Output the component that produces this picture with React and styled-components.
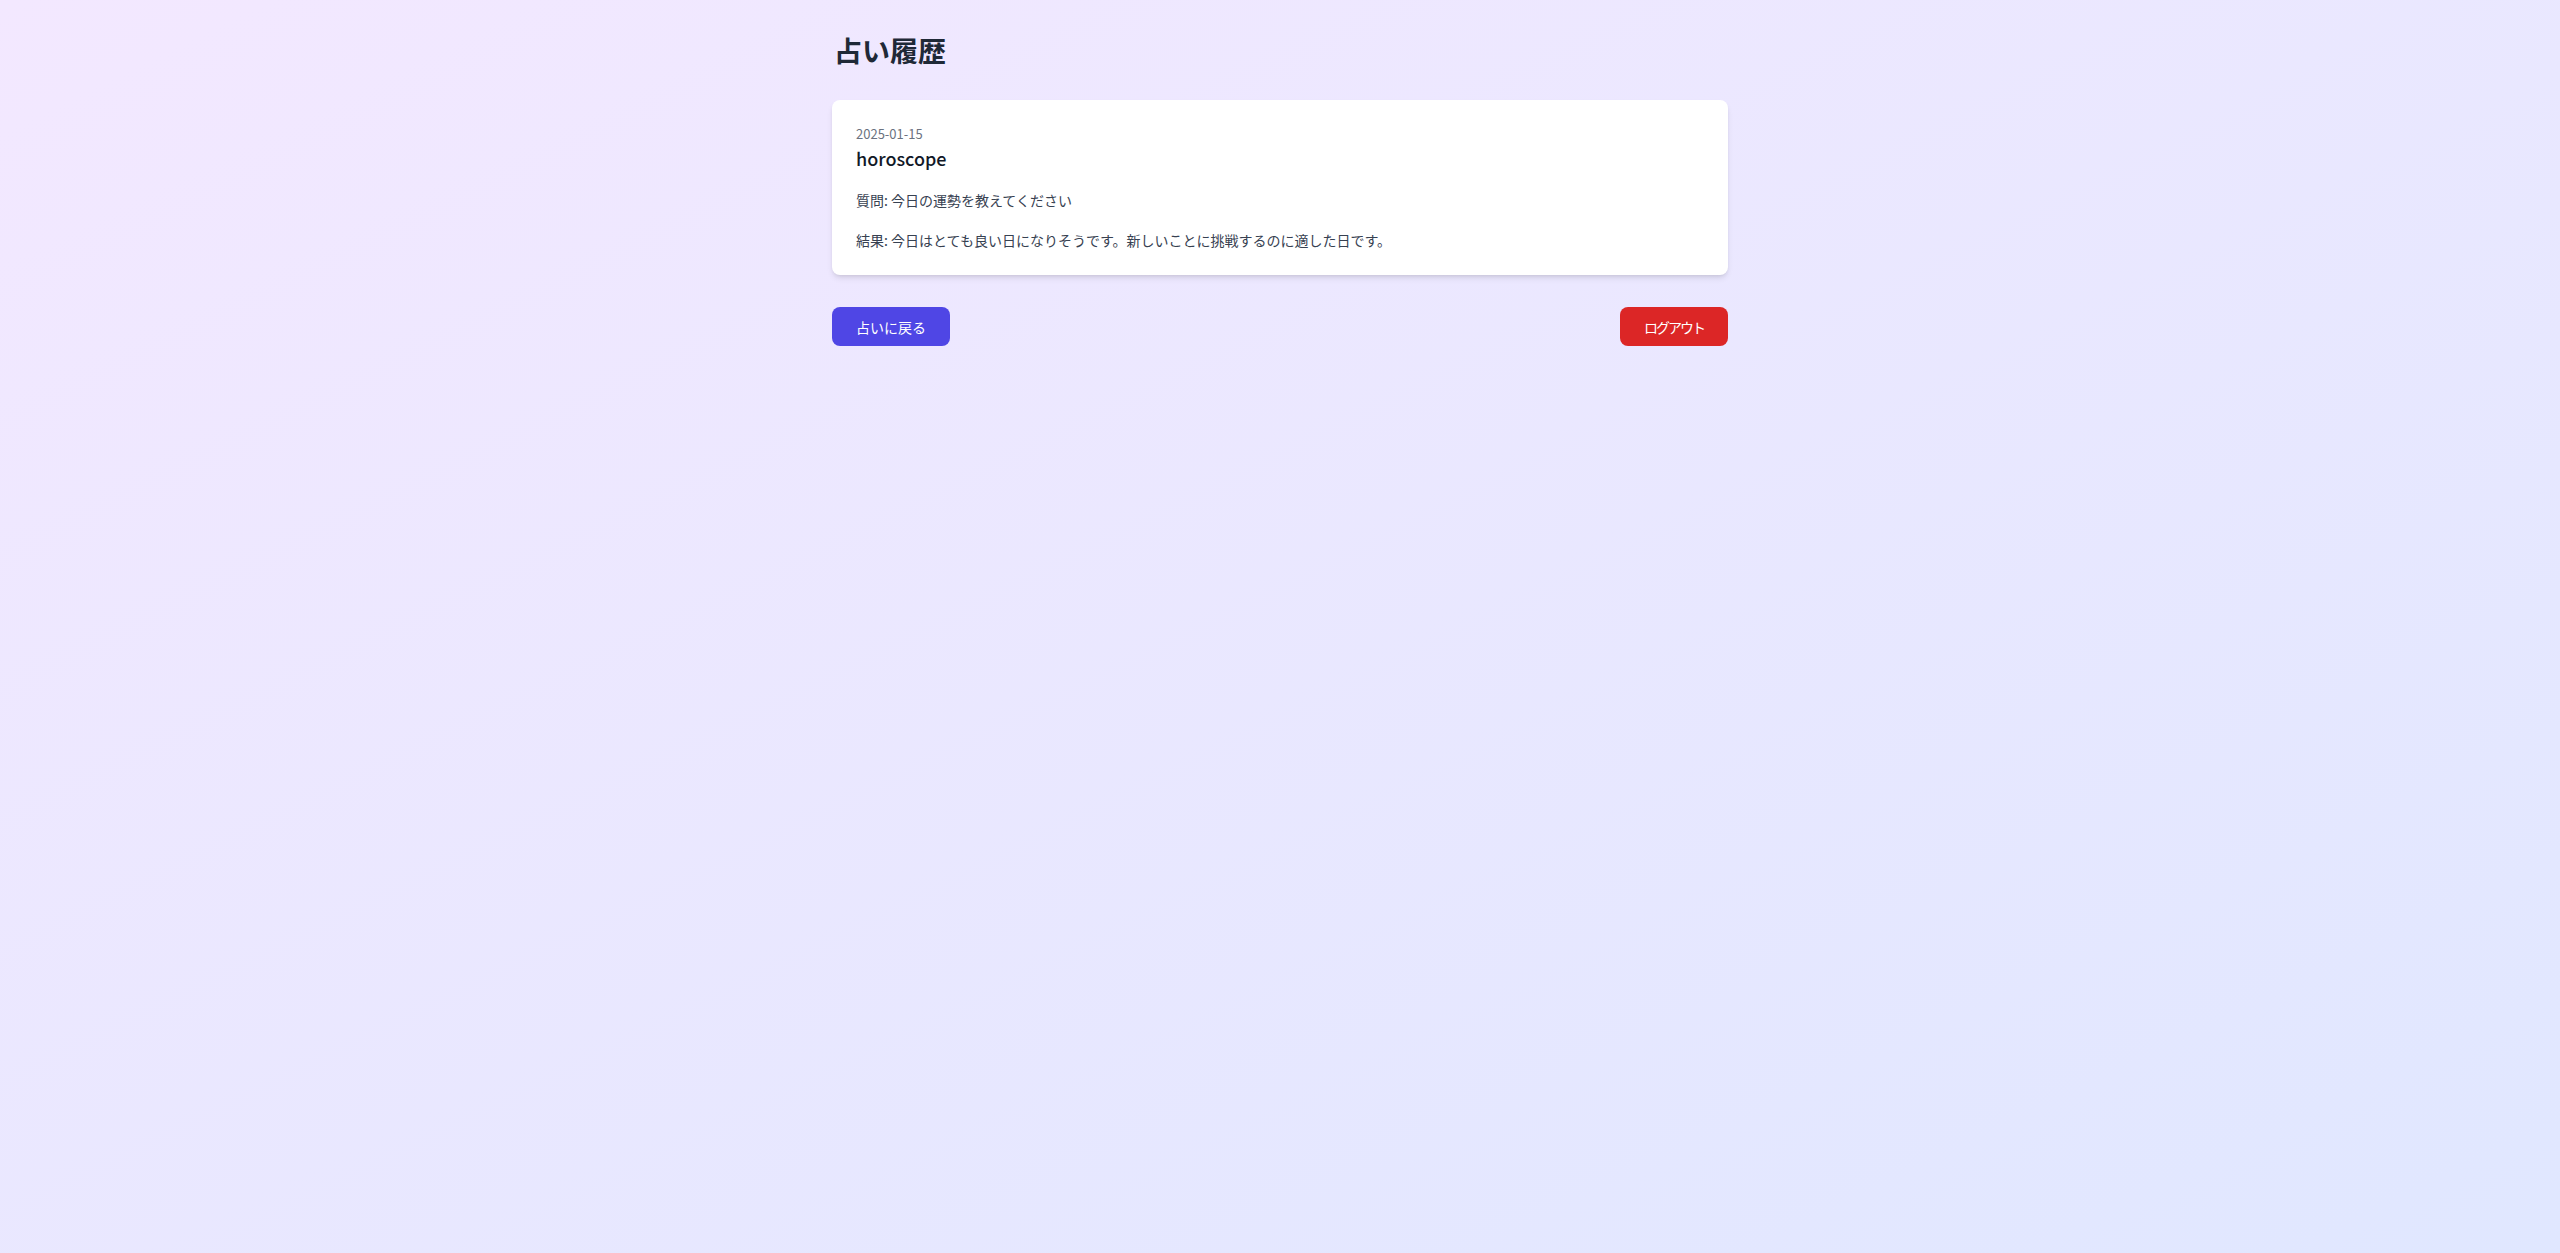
import React from 'react'
import styled, { createGlobalStyle } from 'styled-components'

const GlobalStyle = createGlobalStyle`
  * { box-sizing: border-box; }
  html, body {
    margin: 0;
    padding: 0;
  }
  body {
    font-family: "Noto Sans CJK JP", "Noto Sans", sans-serif;
  }
`

const Page = styled.div`
  min-height: 100vh;
  background: linear-gradient(to bottom right, #f3e8ff, #e0e7ff);
  padding: 32px 16px;
`

const Container = styled.div`
  max-width: 896px;
  margin: 0 auto;
`

const Title = styled.h1`
  margin: 0 0 32px;
  padding-left: 2px;
  font-size: 28px;
  line-height: 36px;
  font-weight: 700;
  color: #1f2937;
`

const Card = styled.div`
  background: #fff;
  border-radius: 8px;
  padding: 24px 24px 25px;
  box-shadow: 0 4px 6px -1px rgba(0, 0, 0, 0.1), 0 2px 4px -2px rgba(0, 0, 0, 0.1);
`

const DateText = styled.div`
  font-size: 13px;
  line-height: 20px;
  color: #6b7280;
`

const Kind = styled.h2`
  margin: 0 0 18px;
  font-size: 18px;
  line-height: 28px;
  font-weight: 500;
  color: #111827;
`

const Line = styled.p`
  margin: ${p => (p.last ? '0' : '0 0 20px')};
  font-size: 14px;
  line-height: 20px;
  color: #374151;
`

const Actions = styled.div`
  display: flex;
  justify-content: space-between;
  align-items: center;
  margin-top: 32px;
`

const Button = styled.button`
  height: 39px;
  padding: 0 24px;
  border: none;
  border-radius: 8px;
  font-family: inherit;
  font-size: 14px;
  letter-spacing: ${p => (p.danger ? '-2px' : '0')};
  color: #fff;
  cursor: pointer;
  background: ${p => (p.danger ? '#dc2626' : '#4f46e5')};
  &:hover {
    background: ${p => (p.danger ? '#b91c1c' : '#4338ca')};
  }
`

const history = [
  {
    id: 1,
    date: '2025-01-15',
    type: 'horoscope',
    question: '今日の運勢を教えてください',
    result: '今日はとても良い日になりそうです。新しいことに挑戦するのに適した日です。',
  },
]

export default function App() {
  return (
    <Page>
      <GlobalStyle />
      <Container>
        <Title>占い履歴</Title>
        {history.map(item => (
          <Card key={item.id}>
            <DateText>{item.date}</DateText>
            <Kind>{item.type}</Kind>
            <Line>質問: {item.question}</Line>
            <Line last>結果: {item.result}</Line>
          </Card>
        ))}
        <Actions>
          <Button>占いに戻る</Button>
          <Button danger>ログアウト</Button>
        </Actions>
      </Container>
    </Page>
  )
}
